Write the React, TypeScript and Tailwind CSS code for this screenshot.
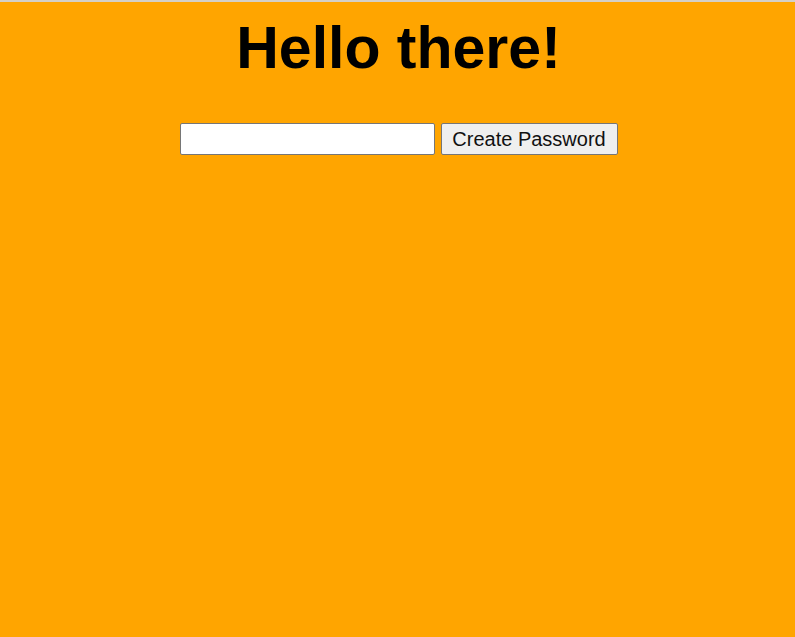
import { useState } from "react";

const App = () => {
  const [password, setPassword] = useState("");

  return (
    <div className="min-h-[637px] bg-[#ffa500] border-t-2 border-[#d4d0c8] text-center font-['Liberation_Sans',Arial,sans-serif] text-black">
      {/* Heading */}
      <h1 className="pt-[12px] text-[59px] font-bold leading-[68px] pl-[2px]">Hello there!</h1>

      {/* Password form */}
      <div className="mt-[41px] flex items-center justify-center gap-[6px] pl-[2px]">
        <input
          type="text"
          value={password}
          onChange={(e) => setPassword(e.target.value)}
          className="h-[32px] w-[255px] rounded-[2px] border border-[#767676] bg-white px-1 text-[20px]"
        />
        <button className="h-[32px] w-[177px] rounded-[2px] border border-[#767676] bg-[#efefef] text-[20px] text-[#111]">
          Create Password
        </button>
      </div>
    </div>
  );
};

export default App;
